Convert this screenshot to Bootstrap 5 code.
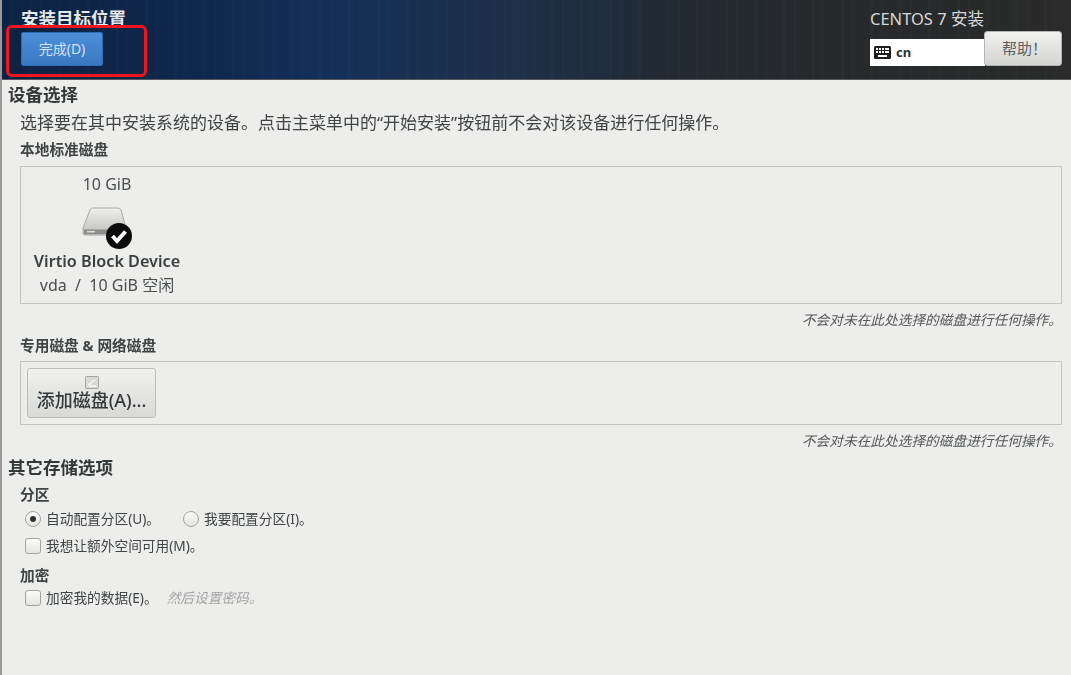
<!DOCTYPE html>
<html lang="zh">
<head>
<meta charset="utf-8">
<title>安装目标位置</title>
<link href="https://cdn.jsdelivr.net/npm/bootstrap@5.3.0/dist/css/bootstrap.min.css" rel="stylesheet">
<style>
html,body{height:100%;overflow:hidden}
body{width:1071px;height:675px;background:#ededeb;color:#3a3f40;font-family:"Noto Sans","Noto Sans CJK SC",sans-serif;font-size:14px;border-left:2px solid #9a9a9a;filter:blur(.35px)}
.hdr{height:80px;margin-left:-2px;background:repeating-linear-gradient(90deg,rgba(255,255,255,.012) 0 3px,rgba(0,0,0,.02) 3px 11px,rgba(255,255,255,.008) 11px 13px,rgba(0,0,0,.015) 13px 29px),linear-gradient(90deg,#0d2344 0,#10294f 20%,#14305a 30%,#1e3048 48%,#222b35 62%,#27292c 75%,#2a2b2a 100%);border-bottom:1px solid #55585c;position:relative;padding:8px 9px 0 21px;}
.ttl{font-size:17.500px;line-height:20px;color:#e6e9ec;font-weight:700}
.done{width:82px;height:34px;margin-top:4px;padding:0;border:1px solid #2f6cb3;border-radius:2px;background:linear-gradient(#4d90da,#3a77c3);color:#d3e2f3;font-size:14px;line-height:32px;}
.annot{position:absolute;left:6px;top:25px;width:141px;height:52px;border:3px solid #f0141c;border-radius:6px;pointer-events:none}
.hright{width:192px}
.prod{font-size:16.500px;line-height:20px;color:#d6d8d8;padding-top:1px;white-space:nowrap}
.kbd{width:115px;height:27px;background:#fff;color:#2e3436;font-weight:700;font-size:13px;gap:5px;padding-left:4px;margin-top:10px}
.helpb{width:78px;height:35px;padding:0 0 0 3px;margin-top:2px;margin-left:-1px;border:1px solid #b5b5b3;border-radius:3px;background:linear-gradient(#f1f1f0,#d4d4d2);color:#5c6162;font-size:15px;}
.h1a{font-size:17.500px;line-height:20px;font-weight:700;color:#33383a;padding-left:6px;}
.desc{font-size:17px;line-height:20px;padding-left:18px;color:#3f4445;margin-top:9px;white-space:nowrap}
.sub{font-size:14.700px;line-height:18px;font-weight:700;color:#3f4445;padding-left:18px}
.panel{margin-left:18px;width:1042px;border:1px solid #c4c4c2;}
.p1{height:138px;margin-top:8px;padding:7px 0 0 11px}
.p2{height:64px;margin-top:7px;padding:6px 0 0 6px}
.disk{width:150px;text-align:center}
.dsize{font-size:16px;line-height:20px;color:#4a4f50}
.dicon{display:block;margin:11px auto 0 auto}
.dname{font-size:16.200px;line-height:20px;font-weight:600;color:#3a3f40;margin-top:2px;white-space:nowrap}
.dfree{font-size:16px;line-height:20px;color:#4a4f50;margin-top:4px;white-space:nowrap}
.hint{font-size:13.700px;line-height:16px;font-style:italic;color:#55595a;text-align:right;padding-right:9px;margin-top:8px}
.addb{width:129px;height:50px;padding:0;border:1px solid #bcbcba;border-radius:3px;background:linear-gradient(#f0f0ee,#d9d9d7);color:#33383a;font-size:18px;line-height:20px;font-weight:500;white-space:nowrap}
.addb svg{display:block;margin:0 auto 1px auto}
.opt{font-size:13.700px;line-height:20px;color:#3f4445;gap:5px;white-space:nowrap}
.rd,.ck{flex:none;width:16px;height:16px;border:1px solid #a2a2a0;background:linear-gradient(#fbfbfa,#e4e4e2);display:inline-flex;align-items:center;justify-content:center}
.rd{border-radius:50%}
.ck{border-radius:3px}
.dot{width:6px;height:6px;border-radius:50%;background:#2e3436}
.opts{padding-left:23px}
.muted{color:#a3a5a5;font-style:italic;margin-left:4px}
</style>
</head>
<body>
<div class="hdr d-flex justify-content-between">
  <div>
    <div class="ttl">安装目标位置</div>
    <button class="btn done d-block" type="button">完成(D)</button>
  </div>
  <div class="hright">
    <div class="prod">CENTOS 7 安装</div>
    <div class="d-flex align-items-start">
      <div class="kbd d-flex align-items-center">
        <svg width="17" height="13" viewBox="0 0 17 13"><rect width="17" height="13" rx="1.500" fill="#1d1f20"/><g fill="#fff"><rect x="2" y="2" width="2" height="2"/><rect x="5" y="2" width="2" height="2"/><rect x="8" y="2" width="2" height="2"/><rect x="11" y="2" width="4" height="2"/><rect x="2" y="5" width="2" height="2"/><rect x="5" y="5" width="2" height="2"/><rect x="8" y="5" width="2" height="2"/><rect x="11" y="5" width="4" height="2"/><rect x="4" y="9" width="9" height="2"/></g></svg>
        <span>cn</span>
      </div>
      <button class="btn helpb" type="button">帮助！</button>
    </div>
  </div>
  <div class="annot"></div>
</div>

<div class="h1a" style="margin-top:4px">设备选择</div>
<div class="desc">选择要在其中安装系统的设备。点击主菜单中的“开始安装”按钮前不会对该设备进行任何操作。</div>
<div class="sub" style="margin-top:7px">本地标准磁盘</div>
<div class="panel p1">
  <div class="disk">
    <div class="dsize">10 GiB</div>
    <svg class="dicon" width="52" height="44" viewBox="0 0 52 44">
      <defs><linearGradient id="dg" x1="0" y1="0" x2="0" y2="1"><stop offset="0" stop-color="#efefed"/><stop offset="1" stop-color="#bdbdbb"/></linearGradient></defs>
      <path d="M11 3 H37 Q39 3 40 5 L45 23 V28 Q45 30 43 30 H4 Q2 30 2 28 V23 L9 5 Q10 3 11 3Z" fill="url(#dg)" stroke="#a8a8a6"/>
      <rect x="3" y="24.500" width="41" height="4.500" fill="#8d8d8b"/>
      <rect x="6" y="26" width="8" height="1.500" fill="#dcdcda"/>
      <circle cx="38" cy="31" r="13" fill="#0b0b0b"/>
      <path d="M31.500 31 l4.500 5 l8.500-9.500" fill="none" stroke="#fff" stroke-width="4"/>
    </svg>
    <div class="dname">Virtio Block Device</div>
    <div class="dfree">vda&nbsp; /&nbsp; 10 GiB 空闲</div>
  </div>
</div>
<div class="hint">不会对未在此处选择的磁盘进行任何操作。</div>
<div class="sub" style="margin-top:8px">专用磁盘 &amp; 网络磁盘</div>
<div class="panel p2">
  <button class="btn addb" type="button">
    <svg width="14" height="13" viewBox="0 0 14 13"><rect x=".5" y=".5" width="13" height="12" rx="1" fill="#d9d9d7" stroke="#a5a5a3"/><path d="M3 9 L10 4 M4 10 H11" stroke="#f7f7f6" stroke-width="1.500"/></svg>
    添加磁盘(A)...
  </button>
</div>
<div class="hint">不会对未在此处选择的磁盘进行任何操作。</div>
<div class="h1a" style="margin-top:8px">其它存储选项</div>
<div class="sub" style="margin-top:8px">分区</div>
<div class="opts d-flex" style="gap:23px;margin-top:6px">
  <div class="opt d-flex align-items-center"><span class="rd"><span class="dot"></span></span>自动配置分区(U)。</div>
  <div class="opt d-flex align-items-center"><span class="rd"></span>我要配置分区(I)。</div>
</div>
<div class="opts opt d-flex align-items-center" style="margin-top:7px"><span class="ck"></span>我想让额外空间可用(M)。</div>
<div class="sub" style="margin-top:10px">加密</div>
<div class="opts opt d-flex align-items-center" style="margin-top:4px"><span class="ck"></span>加密我的数据(E)。<span class="muted">然后设置密码。</span></div>
</body>
</html>
